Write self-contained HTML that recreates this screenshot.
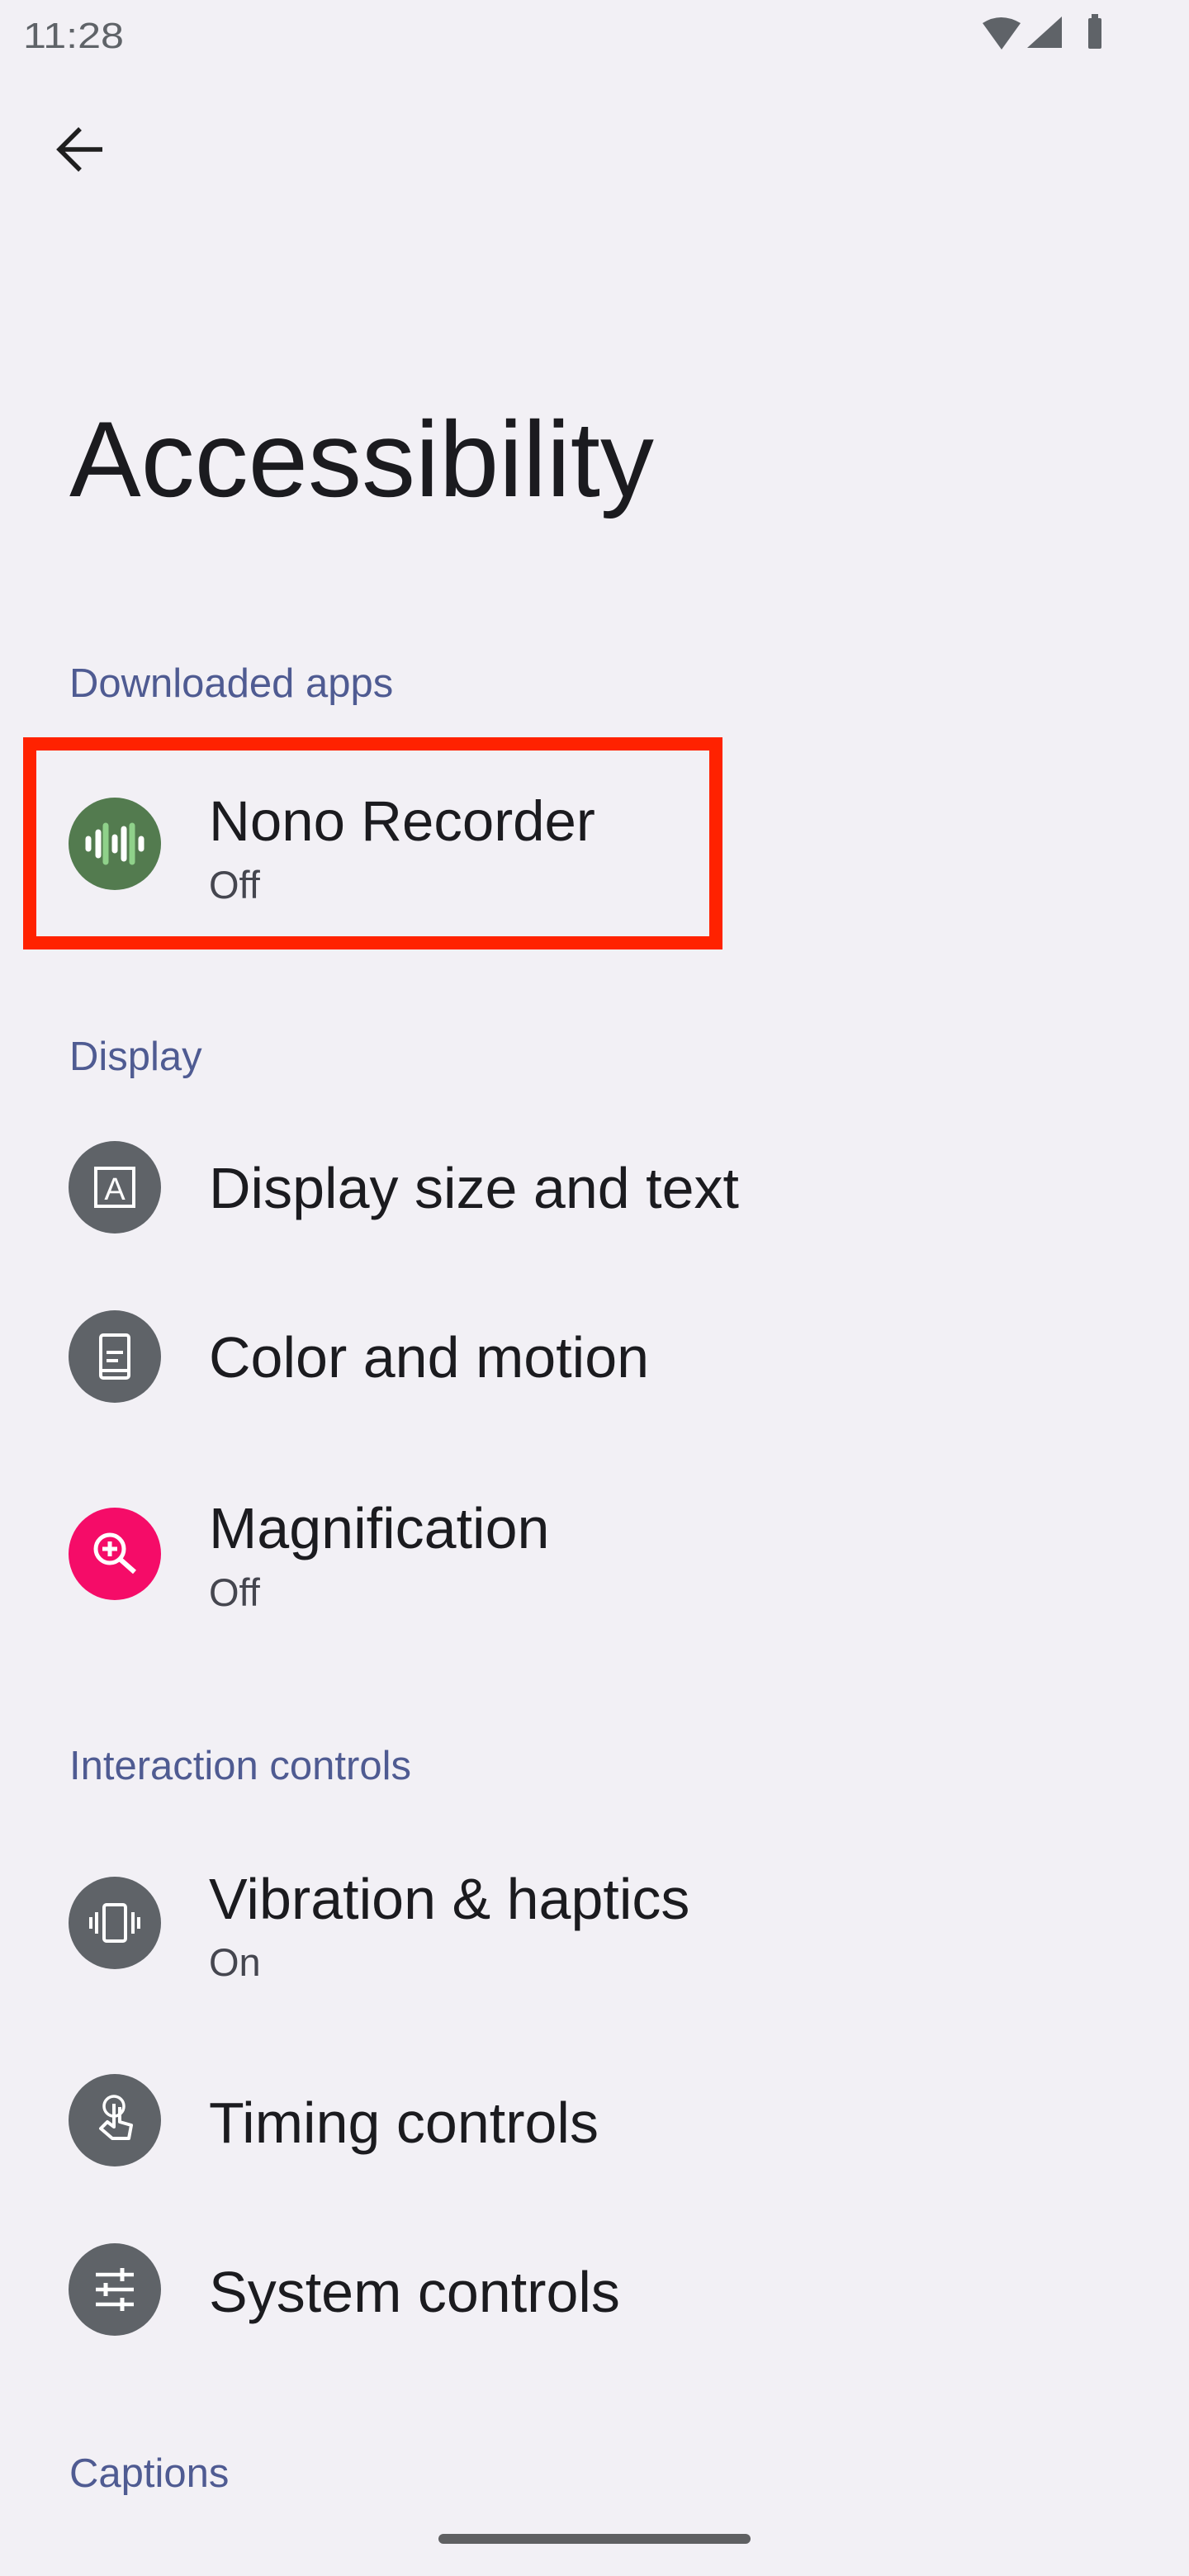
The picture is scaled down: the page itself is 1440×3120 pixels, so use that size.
<!DOCTYPE html>
<html><head><meta charset="utf-8"><style>
html,body{margin:0;padding:0;background:#f2f0f5;}
svg{display:block;}
text{font-family:"Liberation Sans",sans-serif;}
</style></head><body>
<svg width="1440" height="3120" viewBox="0 0 1440 3120" xmlns="http://www.w3.org/2000/svg">
<rect width="1440" height="3120" fill="#f2f0f5"/>
<!-- status bar -->
<text x="28" y="58" font-size="44" fill="#5f6368" textLength="122" lengthAdjust="spacingAndGlyphs">11:28</text>
<path d="M1190 28 Q1212 14 1236 28 L1213 60 Z" fill="#5f6368"/>
<path d="M1244 58 L1286 58 L1286 20 Z" fill="#5f6368"/>
<rect x="1318" y="22" width="16" height="37" rx="2" fill="#5f6368"/>
<rect x="1322" y="17" width="8" height="6" fill="#5f6368"/>
<!-- back arrow -->
<path d="M72 181 H124 M97 156 L72 181 L97 206" stroke="#1f1f1f" stroke-width="5.5" fill="none"/>
<!-- title -->
<text x="84" y="601" font-size="130" fill="#1b1b1f">Accessibility</text>
<!-- sections -->
<text x="84" y="844" font-size="49" fill="#4f5b92">Downloaded apps</text>
<rect x="36" y="901" width="831" height="241" fill="none" stroke="#ff2200" stroke-width="16"/>
<circle cx="139" cy="1022" r="56" fill="#537b4f"/>
<g stroke-linecap="round" stroke-width="7">
<line x1="107" y1="1016" x2="107" y2="1028" stroke="#fff"/>
<line x1="119" y1="1008" x2="119" y2="1036" stroke="#fff"/>
<line x1="128" y1="1000" x2="128" y2="1044" stroke="#8fd18a"/>
<line x1="139" y1="1014" x2="139" y2="1030" stroke="#fff"/>
<line x1="150" y1="1004" x2="150" y2="1040" stroke="#fff"/>
<line x1="160" y1="1000" x2="160" y2="1044" stroke="#8fd18a"/>
<line x1="171" y1="1016" x2="171" y2="1028" stroke="#fff"/>
</g>
<text x="253" y="1018" font-size="69" fill="#1b1b1f">Nono Recorder</text>
<text x="253" y="1088" font-size="47" fill="#45464f">Off</text>

<text x="84" y="1296" font-size="49" fill="#4f5b92">Display</text>
<circle cx="139" cy="1438" r="56" fill="#5f6368"/>
<rect x="116" y="1415" width="46" height="46" fill="none" stroke="#fff" stroke-width="4"/>
<text x="139" y="1453" font-size="38" fill="#fff" text-anchor="middle">A</text>
<text x="253" y="1463" font-size="70" fill="#1b1b1f">Display size and text</text>

<circle cx="139" cy="1643" r="56" fill="#5f6368"/>
<rect x="122" y="1617" width="34" height="52" rx="3" fill="none" stroke="#fff" stroke-width="4"/>
<path d="M129 1638 H149 M129 1648 H143 M124 1660 H154" stroke="#fff" stroke-width="4"/>
<text x="253" y="1668" font-size="70" fill="#1b1b1f">Color and motion</text>

<circle cx="139" cy="1882" r="56" fill="#f50c68"/>
<circle cx="133" cy="1876" r="17" fill="none" stroke="#fff" stroke-width="5"/>
<path d="M133 1867 V1885 M124 1876 H142" stroke="#fff" stroke-width="5"/>
<path d="M146 1889 L163 1904" stroke="#fff" stroke-width="6"/>
<text x="253" y="1875" font-size="70" fill="#1b1b1f">Magnification</text>
<text x="253" y="1945" font-size="47" fill="#45464f">Off</text>

<text x="84" y="2155" font-size="49" fill="#4f5b92">Interaction controls</text>
<circle cx="139" cy="2329" r="56" fill="#5f6368"/>
<rect x="126" y="2307" width="26" height="44" rx="3" fill="none" stroke="#fff" stroke-width="4"/>
<path d="M117 2316 V2342 M161 2316 V2342 M110 2322 V2336 M168 2322 V2336" stroke="#fff" stroke-width="4"/>
<text x="253" y="2324" font-size="70" fill="#1b1b1f">Vibration &amp; haptics</text>
<text x="253" y="2393" font-size="47" fill="#45464f">On</text>

<circle cx="139" cy="2568" r="56" fill="#5f6368"/>
<circle cx="138" cy="2551" r="12" fill="none" stroke="#fff" stroke-width="3.5"/>
<path d="M138 2548 V2576 L130 2570 L122 2578 L136 2590 H156 L159 2574 L145 2570 V2552" fill="none" stroke="#fff" stroke-width="4" stroke-linejoin="round"/>
<text x="253" y="2595" font-size="70" fill="#1b1b1f">Timing controls</text>

<circle cx="139" cy="2773" r="56" fill="#5f6368"/>
<path d="M116 2755 H162 M116 2773 H162 M116 2791 H162" stroke="#fff" stroke-width="4.5"/>
<path d="M148 2747 V2763 M128 2765 V2781 M148 2783 V2799" stroke="#fff" stroke-width="5"/>
<text x="253" y="2800" font-size="70" fill="#1b1b1f">System controls</text>

<text x="84" y="3012" font-size="49" fill="#4f5b92">Captions</text>
<rect x="531" y="3069" width="378" height="12" rx="6" fill="#5f6062"/>
</svg>
</body></html>
